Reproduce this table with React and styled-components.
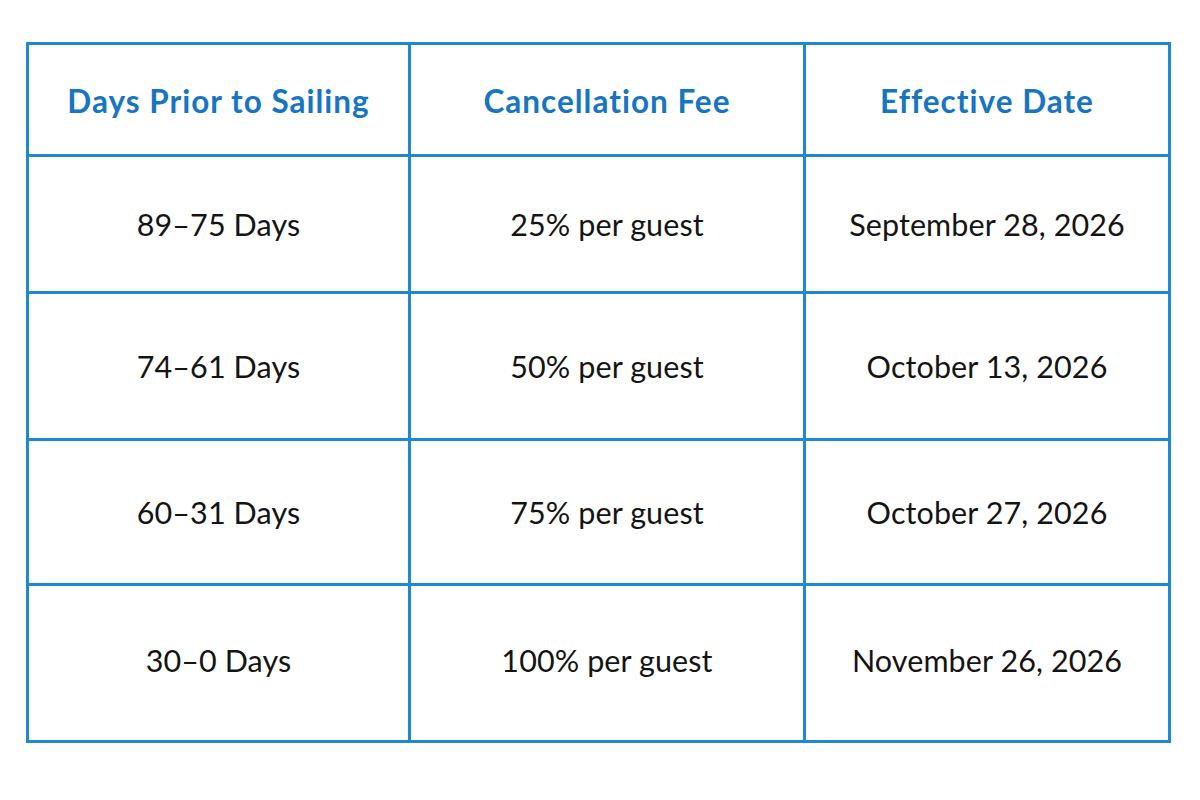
import React from 'react';
import styled, { createGlobalStyle } from 'styled-components';

const GlobalStyle = createGlobalStyle`
  html, body {
    margin: 0;
    padding: 0;
    background: #ffffff;
  }
  body {
    font-family: Lato, "Open Sans", sans-serif;
  }
`;

const Page = styled.div`
  width: 1200px;
  height: 800px;
  padding: 42px 0 0 26px;
  box-sizing: border-box;
`;

// blue gaps between white cells act as the grid lines
const Grid = styled.div`
  display: grid;
  grid-template-columns: 379px 392px 362px;
  grid-template-rows: 109px 134px 144px 142px 154px;
  gap: 3px;
  width: 1145px;
  box-sizing: border-box;
  border: 3px solid #1e88d2;
  background: #1e88d2;
`;

const Cell = styled.div`
  background: #ffffff;
  display: flex;
  align-items: center;
  justify-content: center;
  padding-bottom: ${p => p.$lift || 0}px;
  box-sizing: border-box;
  font-size: 30.5px;
  color: #141414;
  letter-spacing: 0.1px;
`;

const HeadCell = styled(Cell)`
  font-weight: 700;
  font-size: 31.5px;
  color: #1775c2;
  letter-spacing: 1px;
  padding-top: 3px;
`;

const headers = ['Days Prior to Sailing', 'Cancellation Fee', 'Effective Date'];

const rows = [
  ['89–75 Days', '25% per guest', 'September 28, 2026', 0],
  ['74–61 Days', '50% per guest', 'October 13, 2026', 0],
  ['60–31 Days', '75% per guest', 'October 27, 2026', 0],
  ['30–0 Days', '100% per guest', 'November 26, 2026', 6],
];

export default function App() {
  return (
    <>
      <GlobalStyle />
      <Page>
        <Grid>
          {headers.map(h => (
            <HeadCell key={h}>{h}</HeadCell>
          ))}
          {rows.map(r => (
            <React.Fragment key={r[0]}>
              <Cell $lift={r[3]}>{r[0]}</Cell>
              <Cell $lift={r[3]}>{r[1]}</Cell>
              <Cell $lift={r[3]}>{r[2]}</Cell>
            </React.Fragment>
          ))}
        </Grid>
      </Page>
    </>
  );
}
